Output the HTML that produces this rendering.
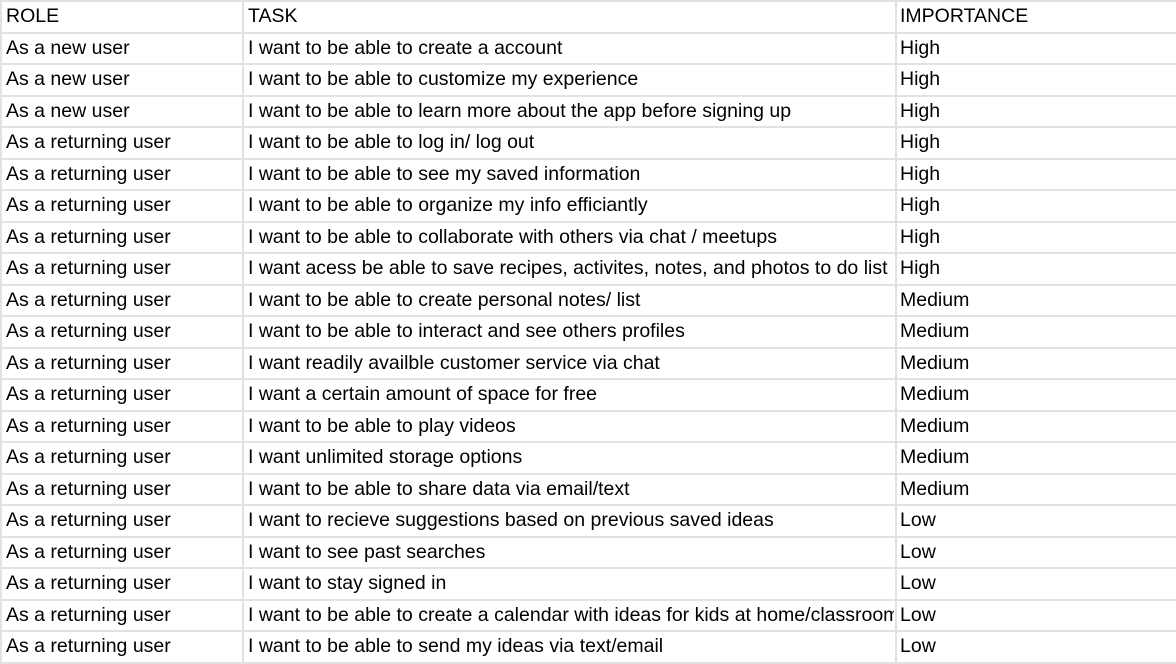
<!DOCTYPE html>
<html><head><meta charset="utf-8"><style>
html,body{margin:0;padding:0;background:#fff;width:1176px;height:664px;overflow:hidden;}
body{position:relative;font-family:"Liberation Sans",Arial,sans-serif;font-size:19.5px;color:#000;}
.h{position:absolute;left:0;width:1176px;height:2px;background:#e2e2e2;}
.v{position:absolute;top:0;width:2px;height:664px;background:#e2e2e2;}
.c{position:absolute;height:30px;line-height:31px;white-space:nowrap;overflow:hidden;}
</style></head><body>
<div id="g"></div>
<script>
var rows=[["ROLE","TASK","IMPORTANCE"],
["As a new user","I want to be able to create a account","High"],
["As a new user","I want to be able to customize my experience","High"],
["As a new user","I want to be able to learn more about the app before signing up","High"],
["As a returning user","I want to be able to log in/ log out","High"],
["As a returning user","I want to be able to see my saved information","High"],
["As a returning user","I want to be able to organize my info efficiantly","High"],
["As a returning user","I want to be able to collaborate with others via chat / meetups","High"],
["As a returning user","I want acess be able to save recipes, activites, notes, and photos to do list","High"],
["As a returning user","I want to be able to create personal notes/ list","Medium"],
["As a returning user","I want to be able to interact and see others profiles","Medium"],
["As a returning user","I want readily availble customer service via chat","Medium"],
["As a returning user","I want a certain amount of space for free","Medium"],
["As a returning user","I want to be able to play videos","Medium"],
["As a returning user","I want unlimited storage options","Medium"],
["As a returning user","I want to be able to share data via email/text","Medium"],
["As a returning user","I want to recieve suggestions based on previous saved ideas","Low"],
["As a returning user","I want to see past searches","Low"],
["As a returning user","I want to stay signed in","Low"],
["As a returning user","I want to be able to create a calendar with ideas for kids at home/classroom","Low"],
["As a returning user","I want to be able to send my ideas via text/email","Low"]];
var h="";
for(var i=0;i<=21;i++){var y=Math.round(i*31.5);if(i==21)y=662;h+='<div class="h" style="top:'+y+'px"></div>';}
[0,242,895].forEach(function(x){h+='<div class="v" style="left:'+x+'px"></div>';});
var xs=[[6,234],[248,646],[900,270]];
rows.forEach(function(r,i){var y=Math.round(i*31.5)+1;
r.forEach(function(t,j){h+='<div class="c" style="top:'+y+'px;left:'+xs[j][0]+'px;width:'+xs[j][1]+'px">'+t+'</div>';});});
document.getElementById("g").innerHTML=h;
</script>
</body></html>
